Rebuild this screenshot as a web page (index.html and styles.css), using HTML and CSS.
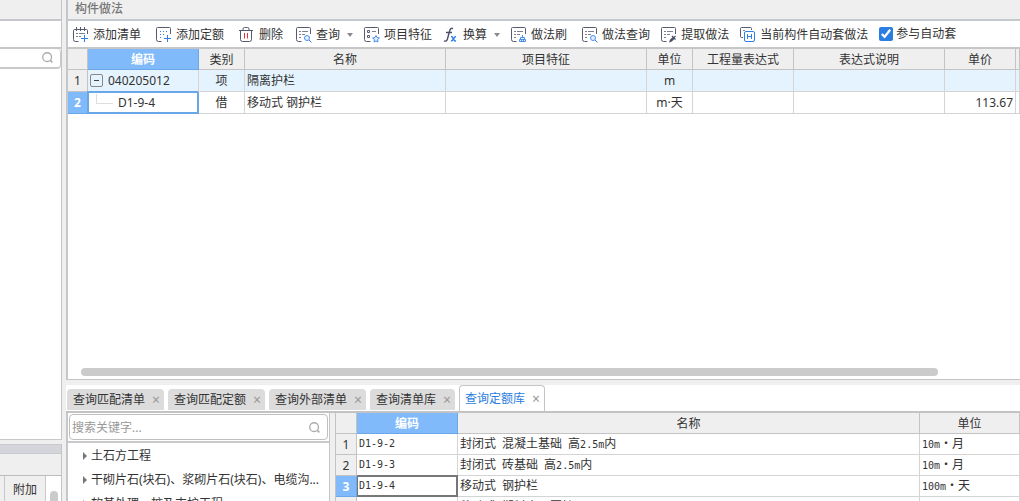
FILE: index.html
```html
<!DOCTYPE html>
<html lang="zh-CN">
<head>
<meta charset="utf-8">
<title>构件做法</title>
<link rel="stylesheet" href="styles.css">
</head>
<body>
<svg class="defs" width="0" height="0" aria-hidden="true">
  <symbol id="i-doc" viewBox="0 0 16 16"><path class="s" d="M5.500 14.500H2.500a2 2 0 0 1-2-2V1.500a1 1 0 0 1 1-1h12a1 1 0 0 1 1 1V7"/><path class="t" d="M3 4.500h2M6 4.500h6M3 7.500h2M6 7.500h3M3 10.500h2"/></symbol>
  <symbol id="i-lens" viewBox="0 0 16 16"><circle cx="7" cy="7" r="5" fill="none" stroke="#aaa" stroke-width="1.500"/><path d="M10.500 10.500 13 13" stroke="#aaa" stroke-width="1.800"/></symbol>
</svg>
<div class="app">
  <aside class="side">
    <section class="side-top">
      <div class="band"></div>
      <div class="blank-row"></div>
      <label class="side-search"><input type="text" aria-label="搜索构件"><svg width="14" height="14"><use href="#i-lens"/></svg></label>
    </section>
    <section class="side-bottom">
      <div class="caption"></div>
      <div class="caption-gap"></div>
      <div class="attach">
        <table><tr><th class="edge"></th><th>附加</th></tr><tr><td class="edge"></td><td></td></tr></table>
        <div class="vtrack"><div class="vthumb"></div></div>
      </div>
    </section>
  </aside>

  <main class="main">
    <section class="upper">
      <h1 class="title">构件做法</h1>
      <div class="toolbar">
        <button class="tool wide"><svg width="16" height="16"><path class="s" d="M5.500 14.500H2.500a2 2 0 0 1-2-2V3.500a1 1 0 0 1 1-1h12a1 1 0 0 1 1 1V7M3.500 0v4M7.500 0v4M11.500 0v4"/><path class="t" d="M3 6.500h2M6 6.500h6M3 9.500h2M6 9.500h2"/><path class="b" d="M11.500 8v7M8 11.500h7"/></svg>添加清单</button>
        <button class="tool wide"><svg width="16" height="16"><path class="s" d="M5.500 14.500H2.500a2 2 0 0 1-2-2V1.500a1 1 0 0 1 1-1h12a1 1 0 0 1 1 1V7"/><path class="b dots" d="M4 4.500h8M4 7.500h5M4 10.500h3"/><path class="b" d="M11.500 8v7M8 11.500h7"/></svg>添加定额</button>
        <button class="tool near"><svg width="16" height="16"><path class="s" d="M0 3.500h14M4 3.500V2a1.500 1.500 0 0 1 1.500-1.500h3A1.500 1.500 0 0 1 10 2v1.500M1.500 3.500v9a2 2 0 0 0 2 2h7a2 2 0 0 0 2-2v-9"/><path class="r" d="M5.500 6v5.500M8.500 6v5.500"/></svg>删除</button>
        <button class="tool"><svg width="16" height="16"><use href="#i-doc"/><circle class="b pale" cx="11" cy="11" r="2.500"/><path class="b" d="m13 13 2.500 2.500"/></svg>查询<i class="caret"></i></button>
        <button class="tool"><svg width="16" height="16"><path class="s" d="M6.500 14.500H2.500a2 2 0 0 1-2-2V1.500a1 1 0 0 1 1-1h12a1 1 0 0 1 1 1V7M3.500 3.500h2v2h-2zM3.500 8.500h2v2h-2z"/><path class="t" d="M8 4.500h4"/><path class="b pale" d="m12 8.500 1 2 2.500.5-2 1.500.5 2.500-2-1-2 1 .5-2.500-2-1.500 2.500-.5z"/></svg>项目特征</button>
        <button class="tool"><svg width="16" height="16"><path d="M10 1.600C8.500.8 7.200 1.500 6.600 4L4.600 11.500C4 14 2.700 14.600 1 13.800M3 5.500h6" fill="none" stroke="#4b5068" stroke-width="1.400"/><path d="m8 9.500 1.200.3 2.300 4 1.500.2M13 9.500l-1 .3-2.700 3.700-1.300.5" fill="none" stroke="#2f80e6" stroke-width="1.400"/></svg>换算<i class="caret"></i></button>
        <button class="tool wide"><svg width="16" height="16"><use href="#i-doc"/><path class="b pale" d="M11.500 8v2.500M9.500 10.500h4v2h-4zM8.500 12.500h6v2h-6zM10.500 13v2M12.500 13v2"/></svg>做法刷</button>
        <button class="tool"><svg width="16" height="16"><use href="#i-doc"/><circle class="b pale" cx="11" cy="11" r="2.500"/><path class="b" d="m13 13 2.500 2.500"/></svg>做法查询</button>
        <button class="tool"><svg width="16" height="16"><use href="#i-doc"/><path d="m9 14.500.5-1.500 2.500-2.500 1 1-2.500 2.500zM11 9l3.500 3.500M13 10.500l1.500-1.500" fill="#4b5068" stroke="#4b5068" stroke-width="1.200"/></svg>提取做法</button>
        <button class="tool"><svg width="16" height="16"><path class="s" d="M3 10.500H1.500a1 1 0 0 1-1-1V1.500a1 1 0 0 1 1-1h9a1 1 0 0 1 1 1V3"/><path class="t" d="M3 3.500h2"/><rect x="4.500" y="4.500" width="10" height="10" rx="1.500" fill="#fff" stroke="#2f80e6"/><path class="b" d="M7.500 7v5M11.500 7v5M7.500 9.500h4"/></svg>当前构件自动套做法</button>
        <label class="auto"><input type="checkbox" checked>参与自动套</label>
      </div>
      <table class="grid">
        <colgroup><col class="w20"><col class="w111"><col class="w46"><col class="w201"><col class="w201"><col class="w46"><col class="w101"><col class="w151"><col class="w71"><col></colgroup>
        <tr><th></th><th class="on">编码</th><th>类别</th><th>名称</th><th>项目特征</th><th>单位</th><th>工程量表达式</th><th>表达式说明</th><th>单价</th><th></th></tr>
        <tr class="hl"><th>1</th><td><div class="node"><button class="fold" aria-label="收起"></button>040205012</div></td><td class="c">项</td><td>隔离护栏</td><td></td><td class="c">m</td><td></td><td></td><td></td><td></td></tr>
        <tr><th class="on">2</th><td class="picked"><div class="node"><i class="branch"></i>D1-9-4</div></td><td class="c">借</td><td>移动式 钢护栏</td><td></td><td class="c">m·天</td><td></td><td></td><td class="n">113.67</td><td></td></tr>
      </table>
      <div class="hthumb"></div>
    </section>

    <section class="lower">
      <nav class="tabs">
        <button class="tab">查询匹配清单<span>×</span></button>
        <button class="tab">查询匹配定额<span>×</span></button>
        <button class="tab">查询外部清单<span>×</span></button>
        <button class="tab">查询清单库<span>×</span></button>
        <button class="tab active">查询定额库<span>×</span></button>
      </nav>
      <div class="panes">
        <div class="tree">
          <div class="find"><label><input type="text" placeholder="搜索关键字..." aria-label="搜索关键字"><svg width="14" height="14"><use href="#i-lens"/></svg></label></div>
          <ul>
            <li>土石方工程</li>
            <li>干砌片石(块石)、浆砌片石(块石)、电缆沟...</li>
            <li>软基处理、桩及支护工程</li>
          </ul>
        </div>
        <div class="result">
          <table class="grid small">
            <colgroup><col class="w21"><col class="w101"><col><col class="w100"></colgroup>
            <tr><th></th><th class="on">编码</th><th>名称</th><th>单位</th></tr>
            <tr><th>1</th><td>D1-9-2</td><td><b>封闭式</b> <b>混凝土基础</b> <b>高</b>2.5m<b>内</b></td><td>10m<b class="dot">·</b><b>月</b></td></tr>
            <tr><th>2</th><td>D1-9-3</td><td><b>封闭式</b> <b>砖基础</b> <b>高</b>2.5m<b>内</b></td><td>10m<b class="dot">·</b><b>月</b></td></tr>
            <tr><th class="on">3</th><td class="picked">D1-9-4</td><td><b>移动式</b> <b>钢护栏</b></td><td>100m<b class="dot">·</b><b>天</b></td></tr>
            <tr><th></th><td></td><td><b>移动式</b> <b>塑料水马围挡</b></td><td></td></tr>
          </table>
        </div>
      </div>
    </section>
  </main>
</div>
</body>
</html>
```

FILE: styles.css
```css
* { box-sizing: border-box; }
body {
  margin: 0;
  background: #efefef;
  color: #333;
  font: 12px/16px "Noto Sans", "Noto Sans CJK SC", sans-serif;
  overflow: hidden;
}
button, input { font: inherit; color: inherit; }
button { border: 0; padding: 0; background: none; white-space: nowrap; }
input[type="text"] { border: 0; outline: 0; padding: 0; background: none; width: 0; min-width: 0; flex: 1; }
svg { flex: none; }
.defs { position: absolute; }
.s { fill: none; stroke: #565b70; }
.t { fill: none; stroke: #7c8090; }
.b { fill: none; stroke: #2f80e6; }
.r { fill: none; stroke: #e0343c; }
.dots { stroke-dasharray: 1 2; }
.pale { stroke: #4a90e8; fill: #e3f0ff; }

.app { display: grid; grid-template-columns: 62px minmax(0, 1fr); column-gap: 4px; height: 100vh; }

/* left column */
.side { display: grid; grid-template-rows: 1fr 57px; grid-template-columns: minmax(0, 1fr); row-gap: 4px; min-width: 0; min-height: 0; }
.side-top { background: #fff; border-right: 1px solid #c4c5c9; border-bottom: 1px solid #c8c8ca; }
.band { height: 21px; background: #efefef; border-bottom: 2px solid #c6c7cb; }
.blank-row { height: 28px; border-bottom: 2px solid #c6c7cb; }
.side-search { display: flex; align-items: center; height: 20px; padding-right: 5px; border-bottom: 2px solid #c9c9cb; border-right: 1px solid #c9c9cb; border-radius: 0 4px 4px 0; }
.side-bottom { border-right: 1px solid #c4c5c9; overflow: hidden; }
.caption { height: 10px; background: #d4d4db; border: 1px solid #c9c9cf; border-width: 1px 0; }
.caption-gap { height: 22px; border-bottom: 1px solid #bcbcbe; }
.attach { display: grid; grid-template-columns: 1fr 15px; height: 30px; }
.attach table { border-collapse: separate; border-spacing: 0; table-layout: fixed; width: 100%; }
.attach th, .attach td { height: 21px; padding: 2px 0 0; font-weight: 400; border: 1px solid #c8c8c8; border-width: 0 1px 1px 0; }
.attach td { background: #fff; }
.attach .edge { width: 5px; }
.vtrack { background: #fff; padding: 15px 3px 0 4px; }
.vthumb { height: 40px; border-radius: 4px; background: #cbcbcb; }

/* right column */
.main { display: grid; grid-template-rows: minmax(0, 1fr) 116px; row-gap: 5px; min-width: 0; min-height: 0; }
.upper { display: flex; flex-direction: column; background: #fff; border-left: 2px solid #c6c7cb; border-bottom: 1px solid #c4c4c4; min-width: 0; }
.title { margin: 0; height: 21px; padding: 1px 0 0 7px; background: #efefef; border-bottom: 2px solid #c6c9cc; font-size: 12px; line-height: 16px; font-weight: 500; color: #777; }
.toolbar { display: flex; align-items: center; gap: 11px; height: 28px; padding: 2px 0 0 5px; border-bottom: 2px solid #c6c6c6; }
.tool { display: flex; align-items: center; gap: 4px; }
.tool svg { margin-bottom: 1px; }
.wide { margin-right: 4px; }
.near { margin-right: 2px; }
.caret { margin-left: 3px; border: 3px solid transparent; border-top: 4px solid #8a8a8a; border-bottom: 0; }
.auto { display: flex; align-items: center; gap: 3px; padding-bottom: 3px; white-space: nowrap; }
.auto input { margin: 0; width: 14px; height: 14px; accent-color: #2a7de1; }

.grid { border-collapse: separate; border-spacing: 0; table-layout: fixed; width: 100%; }
.grid th, .grid td { height: 22px; padding: 0 2px; line-height: 16px; border: 1px solid #d4d4d4; border-width: 0 1px 1px 0; white-space: nowrap; overflow: hidden; }
.grid th { padding: 1px 0 0; background: #efefef; font-weight: 400; border-color: #c3c3c3; }
.grid tr:first-child th { height: 21px; padding: 2px 0 0; }
.grid .on { background: #80bafa; color: #fff; font-weight: 700; border-color: #6aa7e8; }
.grid .hl td { background: #e5f3ff; }
.grid .c { text-align: center; }
.grid .n { text-align: right; }
.grid .picked { border-color: #6aa7e8; box-shadow: inset 0 0 0 1px #6aa7e8, -1px -1px 0 0 #6aa7e8; }
.w20 { width: 20px; }
.w21 { width: 21px; }
.w46 { width: 46px; }
.w71 { width: 71px; }
.w100 { width: 100px; }
.w101 { width: 101px; }
.w111 { width: 111px; }
.w151 { width: 151px; }
.w201 { width: 201px; }
.node { display: flex; align-items: center; gap: 5px; }
.fold { display: grid; place-items: center; width: 13px; height: 13px; border: 1px solid #888; border-radius: 2px; }
.fold::before { content: ""; width: 5px; height: 1px; background: #444; }
.branch { width: 17px; height: 10px; margin: 0 0 8px 6px; border: 1px solid #ddd; border-width: 0 0 1px 1px; }
.hthumb { width: 90%; height: 8px; margin: auto 0 3px 13px; border-radius: 4px; background: #cbcbcb; }

/* query tabs */
.lower { display: grid; grid-template-rows: 28px 1fr; min-width: 0; min-height: 0; overflow: hidden; }
.tabs { display: flex; align-items: flex-end; gap: 4px; padding-left: 1px; background: #fff; border-bottom: 2px solid #c3c3c5; }
.tab { display: flex; align-items: center; gap: 7px; height: 21px; margin-bottom: 1px; padding: 1px 5px 0 6px; border-radius: 4px 4px 0 0; background: #dcdcdc; }
.tab span { width: 7px; font-size: 14px; color: #999; }
.tab.active { height: 26px; margin-bottom: 0; padding: 0 5px; background: #fff; border: 1px solid #c3c3c8; border-bottom: 0; color: #2a7de1; }

.panes { display: grid; grid-template-columns: 264px minmax(0, 1fr); column-gap: 5px; min-height: 0; }
.tree { background: #fff; border-left: 2px solid #c6c7cb; border-right: 1px solid #c6c6c6; overflow: hidden; }
.find { padding: 1px; border-bottom: 2px solid #c9c9cb; }
.find label { display: flex; align-items: center; height: 26px; padding: 1px 5px 0 2px; border: 1px solid #bfbfc2; border-radius: 4px; }
.find input::placeholder { color: #999; opacity: 1; }
.tree ul { margin: 0; padding: 0; list-style: none; }
.tree li { display: flex; align-items: center; gap: 4px; height: 24px; padding: 2px 0 0 15px; white-space: nowrap; }
.tree li::before { content: ""; border: 4px solid transparent; border-left: 4px solid #777; border-right: 0; }
.result { background: #fff; border-left: 1px solid #c3c3c3; overflow: hidden; }
.small th, .small td { height: 21px; }
.small td { font: 10px/16px "DejaVu Sans Mono", "Noto Sans CJK SC", monospace; }
.small b { font-weight: 400; font-size: 12px; font-family: "Noto Sans CJK SC", sans-serif; }
.small .dot { display: inline-block; width: 12px; line-height: 12px; text-align: center; }
.small td.picked { border-color: #777; box-shadow: inset 0 0 0 1px #777, 0 -1px 0 0 #777; }
```
